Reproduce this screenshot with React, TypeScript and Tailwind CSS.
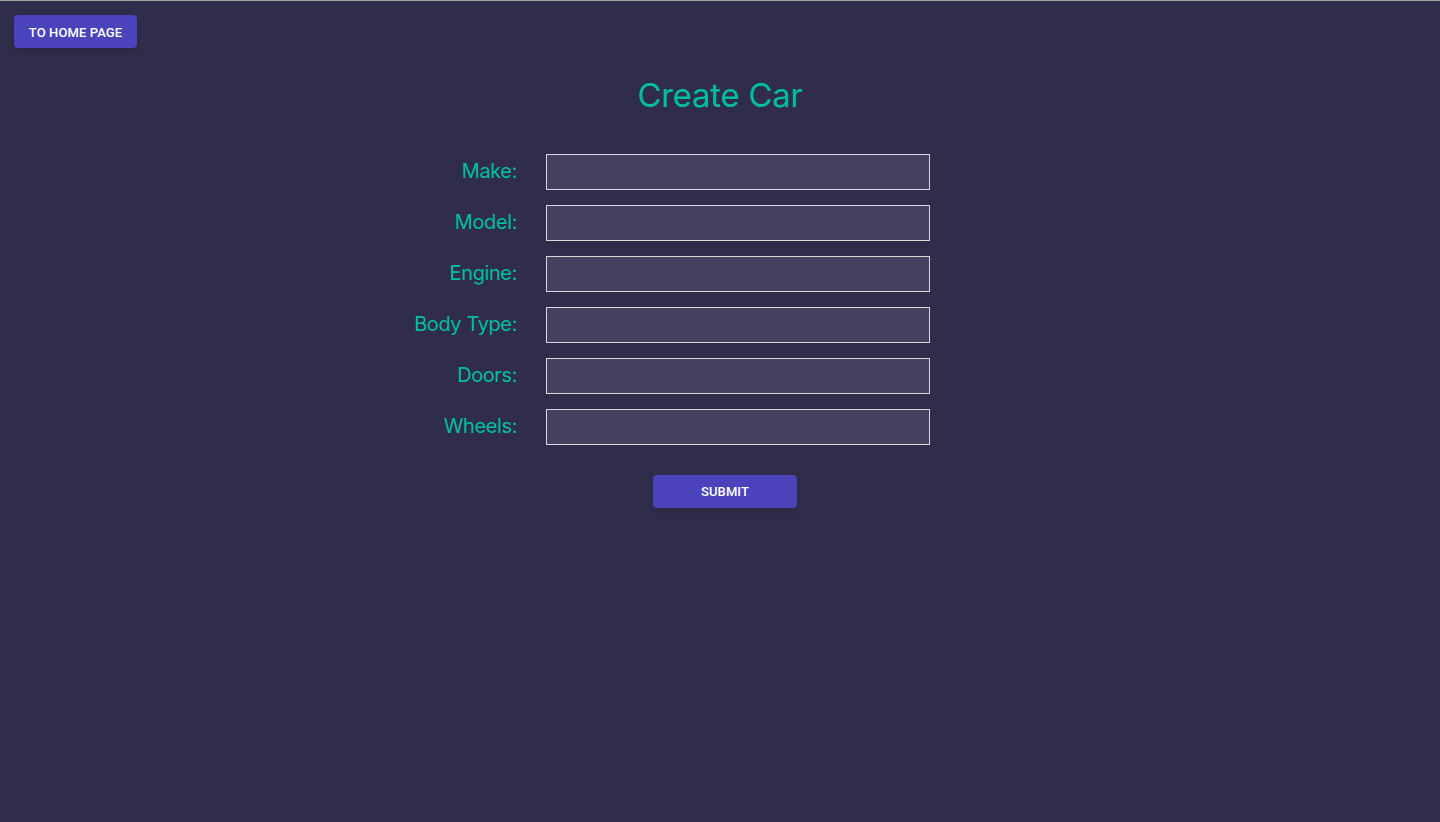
import { useState } from "react"

const fields = [
  { name: "make", label: "Make:" },
  { name: "model", label: "Model:" },
  { name: "engine", label: "Engine:" },
  { name: "bodyType", label: "Body Type:" },
  { name: "doors", label: "Doors:" },
  { name: "wheels", label: "Wheels:" },
]

function App() {
  const [car, setCar] = useState<Record<string, string>>({
    make: "",
    model: "",
    engine: "",
    bodyType: "",
    doors: "",
    wheels: "",
  })

  const handle = (e: React.ChangeEvent<HTMLInputElement>) => {
    setCar({ ...car, [e.target.name]: e.target.value })
  }

  return (
    <div className="min-h-screen w-full bg-[#302d4a] border-t border-[#9ca3a3] font-['Inter',sans-serif]">
      <div className="pt-[14px] pl-[14px]">
        <button className="h-[33px] w-[123px] pt-[2px] rounded bg-[#4a43bb] text-white text-[13px] font-['Roboto',sans-serif] font-medium tracking-[0.1px] shadow-md">
          TO HOME PAGE
        </button>
      </div>

      <h1 className="mt-[28px] text-center text-[33px] leading-[1.2] tracking-[-0.3px] text-[#00bf9f]">Create Car</h1>

      <div className="mt-[38px] grid grid-cols-[517px_384px] gap-x-[29px] gap-y-[15px]">
        {fields.map((f) => (
          <div key={f.name} className="contents">
            <label className="flex items-center justify-end pb-[2px] text-[20px] tracking-[-0.4px] text-[#00bf9f]">{f.label}</label>
            <input
              name={f.name}
              value={car[f.name]}
              onChange={handle}
              className="h-[36px] w-[384px] border border-[#d8d8dc] bg-[#43415e] px-2 text-white outline-none"
            />
          </div>
        ))}
      </div>

      <div className="mt-[30px] pl-[653px]">
        <button className="h-[33px] w-[144px] pt-[2px] rounded bg-[#4a43bb] text-white text-[13px] font-['Roboto',sans-serif] font-medium tracking-[0.1px] shadow-md">
          SUBMIT
        </button>
      </div>
    </div>
  )
}

export default App
